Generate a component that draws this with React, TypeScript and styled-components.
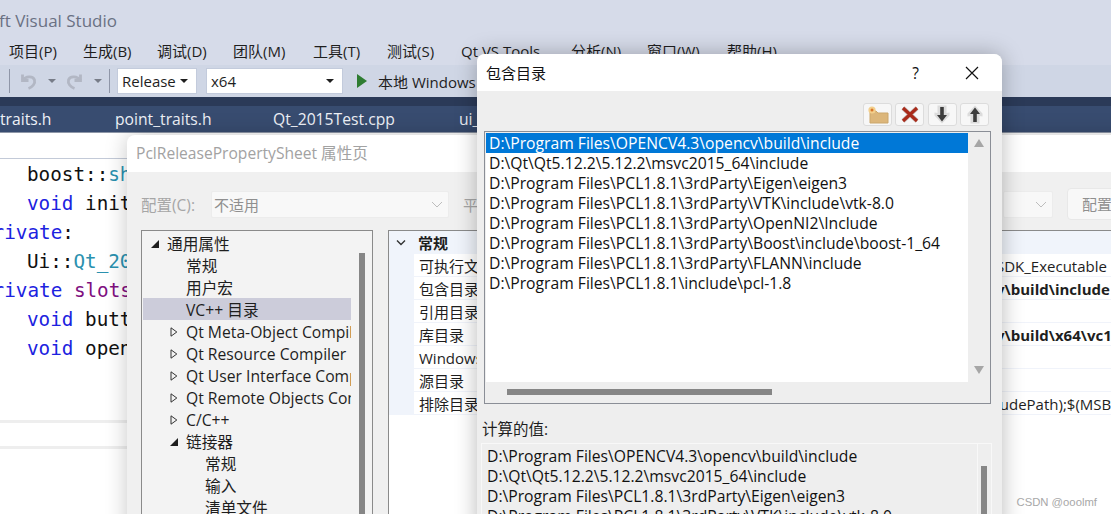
import React, { FC } from 'react'
import styled, { createGlobalStyle } from 'styled-components'

const SANS = `'Open Sans', 'Noto Sans', 'Noto Sans CJK SC', sans-serif`

const Global = createGlobalStyle`
  html, body {
    margin: 0;
    padding: 0;
    width: 1111px;
    height: 514px;
    overflow: hidden;
    background: #fff;
    font-family: ${SANS};
  }
  * { box-sizing: border-box; }
`

const Desktop = styled.div`
  position: relative;
  width: 1111px;
  height: 514px;
  overflow: hidden;
`

/* ---------- Visual Studio behind ---------- */

const TitleBar = styled.div`
  height: 40px;
  background: #d6dbe9;
  color: #6a7183;
  font-size: 17px;
  line-height: 42px;
  white-space: nowrap;
  overflow: hidden;
`

const Clipped = styled.span`
  margin-left: -1px;
`

const MenuBar = styled.div`
  position: relative;
  height: 25px;
  background: #d6dbe9;
  font-size: 15px;
  line-height: 23px;
  color: #1e1e1e;
`

const MenuItem = styled.span<{ $x: number }>`
  position: absolute;
  left: ${({ $x }) => $x}px;
  white-space: nowrap;
`

const ToolBar = styled.div`
  display: flex;
  align-items: center;
  height: 32px;
  background: #cfd6e5;
  padding-left: 9px;
`

const ToolSep = styled.div<{ $left: number; $right: number }>`
  width: 1px;
  height: 24px;
  background: #8f96a8;
  margin: 0 ${({ $right }) => $right}px 0 ${({ $left }) => $left}px;
`

const ToolIcon = styled.svg`
  width: 17px;
  height: 17px;
  margin-left: 10px;
  fill: none;
  stroke: #b2b7c4;
  stroke-width: 2.8;
`

const Caret = styled.div<{ $color?: string }>`
  width: 0;
  height: 0;
  border-left: 4px solid transparent;
  border-right: 4px solid transparent;
  border-top: 4px solid ${({ $color }) => $color || '#777c88'};
`

const ToolCaret = styled(Caret)`
  margin-left: 11px;
`

const Combo = styled.div<{ $width: number }>`
  display: flex;
  align-items: center;
  justify-content: space-between;
  width: ${({ $width }) => $width}px;
  height: 26px;
  margin-right: 9px;
  padding: 0 8px 0 4px;
  background: #fff;
  border: 1px solid #c3cbdc;
  font-size: 15px;
  color: #1e1e1e;
`

const PlayIcon = styled.div`
  width: 0;
  height: 0;
  margin: 0 11px 0 5px;
  border-top: 7px solid transparent;
  border-bottom: 7px solid transparent;
  border-left: 10px solid #2f7d32;
`

const RunLabel = styled.span`
  font-size: 15px;
  color: #1e1e1e;
  white-space: nowrap;
`

const TabStrip = styled.div`
  position: relative;
  height: 36px;
  background: linear-gradient(#2b3a58 0, #2b3a58 9px, #384c70 9px);
  border-bottom: 1px solid #8e97a8;
`

const Tab = styled.span<{ $x: number }>`
  position: absolute;
  left: ${({ $x }) => $x}px;
  top: 11px;
  color: #eef1f7;
  font-size: 15.7px;
  line-height: 22px;
  white-space: nowrap;
`

const Editor = styled.div`
  height: 381px;
  background: #fff;
`

const EditorHead = styled.div`
  height: 26px;
  border-bottom: 1px solid #c3cad8;
  margin-bottom: 1px;
`

const CodeLine = styled.div<{ $indent: number }>`
  height: 29px;
  padding-left: ${({ $indent }) => Math.max($indent, 0)}px;
  margin-left: ${({ $indent }) => Math.min($indent, 0)}px;
  font-family: 'DejaVu Sans Mono', 'Liberation Mono', monospace;
  font-size: 19.3px;
  line-height: 29px;
  color: #111;
  white-space: pre;
`

const Keyword = styled.span`
  color: #1c22e0;
`

const TypeName = styled.span`
  color: #2b91af;
`

const Slot = styled.span`
  color: #80107f;
`

const EditorRule = styled.div<{ $top: number }>`
  height: 3px;
  margin-top: ${({ $top }) => $top}px;
  background: #eeeeee;
`

/* ---------- property sheet window ---------- */

const PropertySheet = styled.div`
  position: absolute;
  left: 127px;
  top: 135px;
  width: 1100px;
  height: 420px;
  border-radius: 8px 0 0 0;
  background: #f0f0f0;
  box-shadow: 0 0 22px rgba(0, 0, 0, 0.22);
`

const SheetTitle = styled.div`
  height: 37px;
  padding-left: 9px;
  border-radius: 8px 0 0 0;
  background: #fff;
  color: #a2a2a2;
  font-size: 15.6px;
  line-height: 36px;
`

const ConfigRow = styled.div`
  display: flex;
  align-items: center;
  height: 32px;
  margin-top: 16px;
  padding-left: 14px;
  color: #a6a6a6;
  font-size: 15px;
  white-space: nowrap;
`

const ConfigLabel = styled.span`
  width: 70px;
  font-size: 15.5px;
`

const DisabledSelect = styled.div<{ $width: number }>`
  display: flex;
  align-items: center;
  justify-content: space-between;
  width: ${({ $width }) => $width}px;
  height: 27px;
  padding: 0 5px 0 2px;
  background: #f8f8f8;
  border: 1px solid #ececec;
  border-radius: 2px;
  color: #8f8f8f;
`

const PlatformLabel = styled.span`
  width: 554px;
  padding-left: 14px;
`

const ConfigButton = styled.div`
  width: 90px;
  height: 32px;
  margin-left: 14px;
  padding-left: 14px;
  background: #f8f8f8;
  border: 1px solid #e8e8e8;
  border-radius: 4px;
  line-height: 30px;
  color: #8f8f8f;
`

const Panels = styled.div`
  display: flex;
  gap: 15px;
  margin: 10px 0 0 14px;
`

const TreePanel = styled.div`
  display: flex;
  justify-content: space-between;
  width: 232px;
  height: 300px;
  padding-left: 1px;
  border: 1px solid #8a8a8a;
  background: #f3f3f3;
`

const TreeList = styled.div`
  width: 208px;
  overflow: hidden;
  padding-top: 1px;
`

const TreeRow = styled.div<{ $level: number; $selected?: boolean }>`
  display: flex;
  align-items: center;
  height: 22px;
  padding: 1px 0 0 ${({ $level }) => 8 + $level * 19}px;
  background: ${({ $selected }) => ($selected ? '#ccccda' : 'transparent')};
  color: #1e1e1e;
  font-size: 15.7px;
  white-space: nowrap;
`

const TreeArrow = styled.svg`
  flex: none;
  width: 8px;
  height: 10px;
  margin-right: 8px;
`

const TreeScroll = styled.div`
  width: 20px;
  padding: 22px 0 0 7px;
`

const ScrollThumb = styled.div<{ $size: number; $horizontal?: boolean }>`
  width: ${({ $size, $horizontal }) => ($horizontal ? $size : 6)}px;
  height: ${({ $size, $horizontal }) => ($horizontal ? 6 : $size)}px;
  background: #868686;
`

const GridPanel = styled.div`
  width: 800px;
  height: 300px;
  border-top: 1px solid #8a8a8a;
  border-left: 1px solid #8a8a8a;
  background: #fff;
`

const GridHead = styled.div`
  display: flex;
  align-items: center;
  height: 23px;
  padding-left: 7px;
  background: #f0f4fb;
  color: #1e1e1e;
  font-size: 15px;
  font-weight: 700;
`

const HeadTitle = styled.span`
  margin-left: 12px;
`

const HeadChevron = styled.svg`
  width: 10px;
  height: 6px;
  fill: none;
  stroke: #333;
  stroke-width: 1.4;
`

const GridRow = styled.div`
  display: flex;
  height: 23px;
  padding-left: 25px;
  background: linear-gradient(90deg, #f0f4fb 25px, transparent 25px);
  font-size: 15px;
  color: #1e1e1e;
`

const GridName = styled.div`
  width: 582px;
  padding-left: 5px;
  background: #fff;
  border-bottom: 1px solid #f0f3fa;
  line-height: 24px;
  white-space: nowrap;
`

const GridValue = styled.div<{ $bold?: boolean }>`
  flex: 1;
  background: #fff;
  border-bottom: 1px solid #f0f3fa;
  font-weight: ${({ $bold }) => ($bold ? 700 : 400)};
  line-height: 24px;
  white-space: nowrap;
`

/* ---------- include directories dialog ---------- */

const Dialog = styled.div`
  position: absolute;
  left: 477px;
  top: 54px;
  width: 525px;
  height: 480px;
  border-radius: 8px 8px 0 0;
  background: #eeeeee;
  box-shadow: 0 0 22px rgba(0, 0, 0, 0.28);
`

const DialogHeader = styled.div`
  display: flex;
  align-items: center;
  height: 37px;
  padding-left: 9px;
  border-radius: 8px 8px 0 0;
  background: #fff;
  color: #111;
  font-size: 15px;
`

const DialogTitle = styled.span`
  flex: 1;
`

const HelpMark = styled.span`
  margin-right: 46px;
  font-size: 15.5px;
`

const CloseIcon = styled.svg`
  width: 14px;
  height: 14px;
  margin-right: 23px;
`

const ButtonRow = styled.div`
  display: flex;
  justify-content: flex-end;
  gap: 3.5px;
  height: 40px;
  padding: 12px 13px 0 0;
`

const IconButton = styled.div`
  display: flex;
  align-items: center;
  justify-content: center;
  width: 29px;
  height: 23px;
  background: #f7f7f7;
  border: 1px solid #dcdcdc;
  border-radius: 3px;
`

const ListBox = styled.div`
  position: relative;
  width: 507px;
  height: 273px;
  margin-left: 7px;
  padding: 1px 0 0 1px;
  border: 1px solid #8a8e96;
`

const ListInner = styled.div`
  width: 482px;
  height: 249px;
  background: #fff;
`

const PathRow = styled.div<{ $selected?: boolean }>`
  height: 20px;
  padding-left: 3px;
  background: ${({ $selected }) => ($selected ? '#0078d7' : 'transparent')};
  color: ${({ $selected }) => ($selected ? '#fff' : '#111')};
  font-size: 15.7px;
  line-height: 21px;
  white-space: nowrap;
`

const ScrollArrow = styled.div<{ $down?: boolean; $top: number }>`
  position: absolute;
  left: 489px;
  top: ${({ $top }) => $top}px;
  width: 0;
  height: 0;
  border-left: 5px solid transparent;
  border-right: 5px solid transparent;
  ${({ $down }) => ($down ? 'border-top: 8px solid #a6a6a6;' : 'border-bottom: 8px solid #a6a6a6;')}
`

const HorizontalTrack = styled.div`
  padding: 7px 0 0 21px;
`

const ComputedLabel = styled.div`
  height: 39px;
  padding: 15px 0 0 5px;
  color: #1e1e1e;
  font-size: 15.5px;
  line-height: 20px;
`

const ComputedBox = styled.div`
  display: flex;
  width: 511px;
  height: 90px;
  margin-left: 4px;
  border: 1px solid #f8f8f8;
`

const ComputedList = styled.div`
  width: 496px;
  padding: 2px 0 0 5px;
  border-right: 1px solid #f8f8f8;
`

const ComputedRow = styled(PathRow)`
  padding-left: 0;
`

const ComputedScroll = styled.div`
  padding: 22px 0 0 3px;
`

const Watermark = styled.div`
  position: absolute;
  right: 14px;
  bottom: 6px;
  color: #a8a8a8;
  font-family: 'Liberation Sans', sans-serif;
  font-size: 11.3px;
`

const menus: [number, string][] = [
  [9, '项目(P)'],
  [83, '生成(B)'],
  [157, '调试(D)'],
  [233, '团队(M)'],
  [313, '工具(T)'],
  [387, '测试(S)'],
  [461, 'Qt VS Tools'],
  [571, '分析(N)'],
  [647, '窗口(W)'],
  [727, '帮助(H)'],
]

const tabs: [number, string][] = [
  [0, 'traits.h'],
  [115, 'point_traits.h'],
  [273, 'Qt_2015Test.cpp'],
  [459, 'ui_'],
]

type TreeItem = { level: number; label: string; arrow?: 'open' | 'closed'; selected?: boolean }

const tree: TreeItem[] = [
  { level: 0, label: '通用属性', arrow: 'open' },
  { level: 1, label: '常规' },
  { level: 1, label: '用户宏' },
  { level: 1, label: 'VC++ 目录', selected: true },
  { level: 1, label: 'Qt Meta-Object Compiler', arrow: 'closed' },
  { level: 1, label: 'Qt Resource Compiler', arrow: 'closed' },
  { level: 1, label: 'Qt User Interface Compiler', arrow: 'closed' },
  { level: 1, label: 'Qt Remote Objects Compiler', arrow: 'closed' },
  { level: 1, label: 'C/C++', arrow: 'closed' },
  { level: 1, label: '链接器', arrow: 'open' },
  { level: 2, label: '常规' },
  { level: 2, label: '输入' },
  { level: 2, label: '清单文件' },
]

const gridRows: [string, string, boolean?][] = [
  ['可执行文件目录', 'SDK_Executable'],
  ['包含目录', 'v\\build\\include', true],
  ['引用目录', ''],
  ['库目录', 'v\\build\\x64\\vc1', true],
  ['Windows 运行库目录', ''],
  ['源目录', ''],
  ['排除目录', 'ludePath);$(MSB'],
]

const paths = [
  'D:\\Program Files\\OPENCV4.3\\opencv\\build\\include',
  'D:\\Qt\\Qt5.12.2\\5.12.2\\msvc2015_64\\include',
  'D:\\Program Files\\PCL1.8.1\\3rdParty\\Eigen\\eigen3',
  'D:\\Program Files\\PCL1.8.1\\3rdParty\\VTK\\include\\vtk-8.0',
  'D:\\Program Files\\PCL1.8.1\\3rdParty\\OpenNI2\\Include',
  'D:\\Program Files\\PCL1.8.1\\3rdParty\\Boost\\include\\boost-1_64',
  'D:\\Program Files\\PCL1.8.1\\3rdParty\\FLANN\\include',
  'D:\\Program Files\\PCL1.8.1\\include\\pcl-1.8',
]

const Chevron: FC = () => (
  <svg width="12" height="7" viewBox="0 0 12 7" fill="none" stroke="#bdbdbd">
    <path d="M1 1l5 5 5-5" />
  </svg>
)

const Arrow: FC<{ kind?: 'open' | 'closed' }> = ({ kind }) => (
  <TreeArrow viewBox="0 0 8 10">
    {kind === 'open' && <path d="M8 1v8H0z" fill="#1e1e1e" />}
    {kind === 'closed' && <path d="M1 .8L6.8 5 1 9.2z" fill="none" stroke="#333" />}
  </TreeArrow>
)

const UndoGlyph: FC = () => (
  <ToolIcon viewBox="0 0 17 17">
    <path d="M2.5 1.5v6h6" />
    <path d="M2.5 7.5C5.5 3 13 2.5 14.5 7c1 3.5-2 7-6 8.500" />
  </ToolIcon>
)

const RedoGlyph: FC = () => (
  <ToolIcon viewBox="0 0 17 17">
    <path d="M14.5 1.5v6h-6" />
    <path d="M14.500 7.500C11.500 3 4 2.500 2.500 7c-1 3.500 2 7 6 8.500" />
  </ToolIcon>
)

const FolderGlyph: FC = () => (
  <svg width="24" height="19" viewBox="0 0 24 19">
    <path d="M5 6h6l2 2h10v10H5z" fill="#dcb67a" stroke="#cba76c" />
    <circle cx="7" cy="5" r="3.600" fill="#f3cf8c" />
    <circle cx="7" cy="5" r="1.500" fill="#d8762c" />
  </svg>
)

const DeleteGlyph: FC = () => (
  <svg width="20" height="17" viewBox="0 0 20 17">
    <path d="M3 2l14 13M17 2L3 15" stroke="#c9c3c0" strokeWidth="4.600" />
    <path d="M3 2l14 13M17 2L3 15" stroke="#a92a1a" strokeWidth="3.200" />
  </svg>
)

const VerticalArrow: FC<{ up?: boolean }> = ({ up }) => (
  <svg width="18" height="19" viewBox="0 0 18 19">
    <g transform={up ? undefined : 'rotate(180 9 9.500)'}>
      <path d="M9 .5l7.500 8v3l-3-.5v7.500h-9V11l-3 .5v-3z" fill="#dcdcdc" />
      <path d="M9 2.500L14 9h-3.200v8H7.200V9H4z" fill="#3c3c3c" />
    </g>
  </svg>
)

const App: FC = () => (
  <Desktop>
    <Global />
    <TitleBar>
      <Clipped>ft Visual Studio</Clipped>
    </TitleBar>
    <MenuBar>
      {menus.map(([x, label]) => (
        <MenuItem key={label} $x={x}>
          {label}
        </MenuItem>
      ))}
    </MenuBar>
    <ToolBar>
      <ToolSep $left={0} $right={0} />
      <UndoGlyph />
      <ToolCaret />
      <RedoGlyph />
      <ToolCaret />
      <ToolSep $left={7} $right={7} />
      <Combo $width={80}>
        Release
        <Caret $color="#1e1e1e" />
      </Combo>
      <Combo $width={137}>
        x64
        <Caret $color="#1e1e1e" />
      </Combo>
      <PlayIcon />
      <RunLabel>本地 Windows 调试器</RunLabel>
    </ToolBar>
    <TabStrip>
      {tabs.map(([x, label]) => (
        <Tab key={label} $x={x}>
          {label}
        </Tab>
      ))}
    </TabStrip>
    <Editor>
      <EditorHead />
      <CodeLine $indent={27}>
        boost::<TypeName>shared_ptr</TypeName>
      </CodeLine>
      <CodeLine $indent={27}>
        <Keyword>void</Keyword> initialize();
      </CodeLine>
      <CodeLine $indent={-19}>
        <Keyword>private</Keyword>:
      </CodeLine>
      <CodeLine $indent={27}>
        Ui::<TypeName>Qt_2015Test</TypeName> ui;
      </CodeLine>
      <CodeLine $indent={-19}>
        <Keyword>private</Keyword> <Slot>slots</Slot>:
      </CodeLine>
      <CodeLine $indent={27}>
        <Keyword>void</Keyword> button();
      </CodeLine>
      <CodeLine $indent={27}>
        <Keyword>void</Keyword> open();
      </CodeLine>
      <EditorRule $top={57} />
      <EditorRule $top={23} />
    </Editor>

    <PropertySheet>
      <SheetTitle>PclReleasePropertySheet 属性页</SheetTitle>
      <ConfigRow>
        <ConfigLabel>配置(C):</ConfigLabel>
        <DisabledSelect $width={238}>
          不适用
          <Chevron />
        </DisabledSelect>
        <PlatformLabel>平台(P):</PlatformLabel>
        <DisabledSelect $width={50}>
          <span />
          <Chevron />
        </DisabledSelect>
        <ConfigButton>配置管理器(O)...</ConfigButton>
      </ConfigRow>
      <Panels>
        <TreePanel>
          <TreeList>
            {tree.map((item) => (
              <TreeRow key={item.level + item.label} $level={item.level} $selected={item.selected}>
                <Arrow kind={item.arrow} />
                {item.label}
              </TreeRow>
            ))}
          </TreeList>
          <TreeScroll>
            <ScrollThumb $size={280} />
          </TreeScroll>
        </TreePanel>
        <GridPanel>
          <GridHead>
            <HeadChevron viewBox="0 0 10 6">
              <path d="M1 .5l4 4 4-4" />
            </HeadChevron>
            <HeadTitle>常规</HeadTitle>
          </GridHead>
          {gridRows.map(([name, value, bold]) => (
            <GridRow key={name}>
              <GridName>{name}</GridName>
              <GridValue $bold={bold}>{value}</GridValue>
            </GridRow>
          ))}
        </GridPanel>
      </Panels>
    </PropertySheet>

    <Dialog>
      <DialogHeader>
        <DialogTitle>包含目录</DialogTitle>
        <HelpMark>?</HelpMark>
        <CloseIcon viewBox="0 0 14 14" fill="none" stroke="#111" strokeWidth="1.2">
          <path d="M1 1l12 12M13 1L1 13" />
        </CloseIcon>
      </DialogHeader>
      <ButtonRow>
        <IconButton>
          <FolderGlyph />
        </IconButton>
        <IconButton>
          <DeleteGlyph />
        </IconButton>
        <IconButton>
          <VerticalArrow />
        </IconButton>
        <IconButton>
          <VerticalArrow up />
        </IconButton>
      </ButtonRow>
      <ListBox>
        <ListInner>
          {paths.map((path, index) => (
            <PathRow key={path} $selected={index === 0}>
              {path}
            </PathRow>
          ))}
        </ListInner>
        <ScrollArrow $top={7} />
        <ScrollArrow $down $top={234} />
        <HorizontalTrack>
          <ScrollThumb $size={265} $horizontal />
        </HorizontalTrack>
      </ListBox>
      <ComputedLabel>计算的值:</ComputedLabel>
      <ComputedBox>
        <ComputedList>
          {paths.slice(0, 4).map((path) => (
            <ComputedRow key={path}>{path}</ComputedRow>
          ))}
        </ComputedList>
        <ComputedScroll>
          <ScrollThumb $size={60} />
        </ComputedScroll>
      </ComputedBox>
    </Dialog>
    <Watermark>CSDN @ooolmf</Watermark>
  </Desktop>
)

export default App
